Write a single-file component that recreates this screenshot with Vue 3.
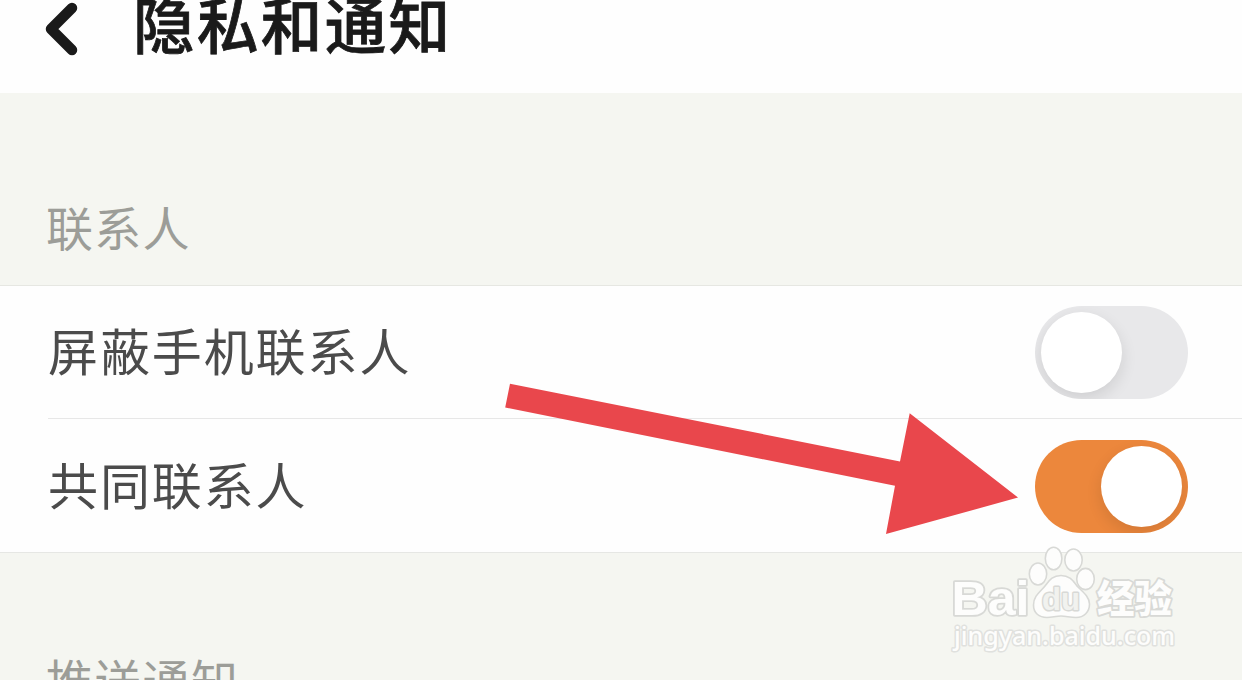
<script setup>
import { ref } from 'vue'

const settings = ref([
  { label: '屏蔽手机联系人', on: false },
  { label: '共同联系人', on: true },
])
</script>

<template>
  <div class="screen">
    <header class="bar">
      <svg class="back" width="36" height="58" viewBox="0 0 36 58">
        <path d="M28 8 L7 29 L28 50" />
      </svg>
      <h1 class="title">隐私和通知</h1>
    </header>

    <h2 class="section first">联系人</h2>
    <ul class="list">
      <li v-for="item in settings" :key="item.label" class="row">
        <span class="label">{{ item.label }}</span>
        <button class="switch" :class="{ on: item.on }" role="switch" :aria-checked="item.on" @click="item.on = !item.on">
          <span class="knob"></span>
        </button>
      </li>
    </ul>
    <h2 class="section second">推送通知</h2>

    <svg class="arrow" width="520" height="156" viewBox="502 381 520 156">
      <path d="M510 383.7 L900 461.5 L909.7 413.3 L1018 497.6 L886 534 L895 485.8 L505.2 407.5 Z" />
    </svg>

    <svg class="watermark" width="242" height="116" viewBox="940 540 242 116">
      <g class="mark">
        <ellipse cx="1038" cy="574" rx="8.7" ry="11" />
        <ellipse cx="1053.6" cy="558.5" rx="8.3" ry="11.2" />
        <ellipse cx="1073.5" cy="560" rx="8.7" ry="11" />
        <ellipse cx="1085.5" cy="579" rx="8.8" ry="10.6" />
        <path d="M1061 575.5 C1052 575.5 1049 581 1045 586 C1040 592 1033.5 596 1033.5 605 C1033.5 613 1039 617.5 1047 617.5 C1052 617.5 1056 616 1061 616 C1066 616 1070 617.5 1076 617.5 C1084 617.5 1089.5 612 1089.5 604 C1089.5 597 1083 592 1078 587 C1073 581 1070 575.5 1061 575.5 Z" />
        <text class="bai" x="951.5" y="615" textLength="78" lengthAdjust="spacingAndGlyphs">Bai</text>
        <text class="du" x="1042" y="610" textLength="38" lengthAdjust="spacingAndGlyphs">du</text>
        <text class="cn" x="1097" y="612" textLength="75" lengthAdjust="spacingAndGlyphs">经验</text>
        <text class="url" x="954" y="645" textLength="221" lengthAdjust="spacingAndGlyphs">jingyan.baidu.com</text>
      </g>
    </svg>
  </div>
</template>

<style>
body {
  margin: 0;
  overflow: hidden;
}
</style>

<style scoped>
.screen {
  position: relative;
  width: 1242px;
  height: 680px;
  overflow: hidden;
  background: #f5f6f1;
  font-family: "Noto Sans CJK SC", sans-serif;
}
.bar {
  display: flex;
  height: 93px;
  background: #fefefe;
}
.back {
  margin-left: 44px;
  fill: none;
  stroke: #1a1a1a;
  stroke-width: 10.5;
  stroke-linecap: round;
  stroke-linejoin: round;
}
.title {
  margin: -22px 0 0 53px;
  height: 90px;
  line-height: 90px;
  font-size: 61.5px;
  font-weight: 500;
  letter-spacing: 2.4px;
  color: #1a1a1a;
  -webkit-text-stroke: 0.8px #1a1a1a;
}
.section {
  margin: 0;
  padding-left: 46px;
  height: 70px;
  line-height: 70px;
  font-size: 47px;
  font-weight: 400;
  letter-spacing: 1.3px;
  color: #9c9d98;
}
.first {
  padding-top: 98px;
  padding-bottom: 24px;
}
.second {
  padding-top: 91px;
}
.list {
  margin: 0;
  padding: 0;
  list-style: none;
  background: #fefefe;
  border-top: 1px solid #e6e7e2;
  border-bottom: 1px solid #e6e7e4;
}
.row {
  display: flex;
  align-items: center;
  justify-content: space-between;
  height: 132px;
  margin-left: 48px;
  padding-right: 54px;
}
.row + .row {
  height: 131px;
  padding-top: 2px;
  border-top: 1px solid #e7e7e7;
}
.label {
  margin-top: -6px;
  line-height: 70px;
  font-size: 50px;
  letter-spacing: 1.9px;
  color: #4b4b4b;
}
.row + .row .label {
  margin-top: -8px;
}
.switch {
  display: flex;
  width: 153px;
  height: 93px;
  padding: 6px;
  border: 0;
  border-radius: 47px;
  background: #e8e8ea;
  overflow: hidden;
}
.switch.on {
  justify-content: flex-end;
  background: #ec873c;
}
.knob {
  width: 81px;
  height: 81px;
  border-radius: 50%;
  background: #fff;
  box-shadow: 0 6px 16px rgba(0, 0, 0, 0.11);
}
.arrow {
  position: absolute;
  left: 502px;
  top: 381px;
  fill: #e9474c;
}
.watermark {
  position: absolute;
  left: 940px;
  top: 540px;
}
.mark {
  fill: #fdfdfc;
  stroke: #d8d9d6;
  stroke-width: 1.6;
}
.mark text {
  paint-order: stroke;
  stroke-width: 3.6;
  stroke-linejoin: round;
}
.mark .bai {
  font: 700 49px "Liberation Sans", sans-serif;
}
.mark .du {
  font: 700 32px "Liberation Sans", sans-serif;
  fill: #f1f2ef;
  stroke-width: 3;
}
.mark .cn {
  font: 900 38px "Noto Sans CJK SC", sans-serif;
}
.mark .url {
  font: 500 25px "Noto Sans", sans-serif;
  stroke: #e0e1de;
  stroke-width: 3;
}
</style>
